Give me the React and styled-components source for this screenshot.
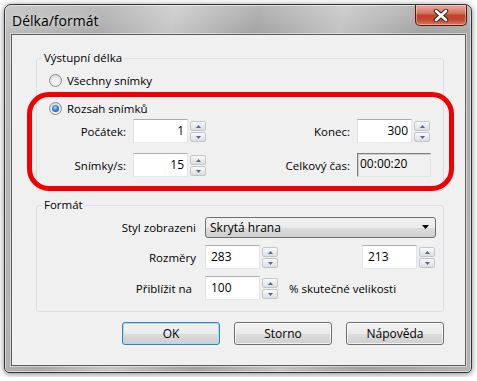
import React from "react";
import styled, { createGlobalStyle, css } from "styled-components";

const GlobalStyle = createGlobalStyle`
  html, body {
    margin: 0;
    padding: 0;
    background: #ffffff;
  }
  body {
    font-family: "Open Sans", "Noto Sans", sans-serif;
    font-size: 11.5px;
    color: #000000;
  }
  * {
    box-sizing: border-box;
  }
`;

const Page = styled.div`
  padding: 4px;
`;

const Window = styled.div`
  width: 468px;
  height: 369px;
  display: flex;
  flex-direction: column;
  border: 1px solid #343434;
  border-radius: 7px 7px 5px 5px;
  background:
    linear-gradient(180deg, rgba(255, 255, 255, 0.22), rgba(255, 255, 255, 0) 30px),
    linear-gradient(
      100deg,
      #bdbdbd 0%,
      #a9a9a9 18%,
      #c6c6c6 32%,
      #a2a2a2 48%,
      #c2c2c2 64%,
      #a1a1a1 80%,
      #b4b4b4 100%
    );
  box-shadow: 0 1px 6px rgba(0, 0, 0, 0.5), inset 0 0 0 1px rgba(255, 255, 255, 0.5);
`;

const TitleBar = styled.div`
  height: 29px;
  display: flex;
  align-items: flex-start;
  padding: 0 4px 0 7px;
`;

const Title = styled.div`
  align-self: center;
  margin-top: 2px;
  font-size: 14px;
  color: #000;
  text-shadow: 0 0 6px rgba(255, 255, 255, 0.85);
`;

const CloseButton = styled.div`
  margin-left: auto;
  width: 52px;
  height: 21px;
  border: 1px solid #4a1d15;
  border-top: none;
  border-radius: 0 0 5px 5px;
  background: linear-gradient(
    180deg,
    #e8ad9f 0%,
    #d8755f 40%,
    #c2412a 52%,
    #c5482f 75%,
    #e07a5c 100%
  );
  box-shadow: inset 0 0 0 1px rgba(255, 255, 255, 0.35);
  display: flex;
  align-items: center;
  justify-content: center;
`;

const Client = styled.div`
  position: relative;
  flex: 1;
  margin: 0 5px 6px 6px;
  border: 1px solid #5e5e5e;
  background: #f0f0f0;
  box-shadow: 0 0 0 1px rgba(255, 255, 255, 0.45);
  padding: 15px 21px 0 24px;
  display: flex;
  flex-direction: column;
`;

const Group = styled.fieldset`
  margin: ${(p) => p.$top || 0}px 0 0 0;
  padding: ${(p) => p.$pad};
  border: 1px solid #d5dfe5;
  border-radius: 3px;
  min-width: 0;
`;

const GroupLegend = styled.legend`
  padding: 0 2px;
  margin-left: -6px;
  height: 16px;
  line-height: 16px;
`;

const RadioRow = styled.label`
  display: flex;
  align-items: center;
  gap: 5px;
  height: 16px;
  padding-left: 1px;
  margin-top: ${(p) => p.$top || 0}px;
`;

const RadioCircle = styled.span`
  position: relative;
  width: 13px;
  height: 13px;
  border-radius: 50%;
  border: 1px solid #8a8c8e;
  background: radial-gradient(circle at 50% 60%, #fdfdfd 0%, #e6e6e6 55%, #c8c8c8 100%);

  ${(p) =>
    p.$checked &&
    css`
      &::after {
        content: "";
        position: absolute;
        left: 2px;
        top: 2px;
        width: 7px;
        height: 7px;
        border-radius: 50%;
        background: radial-gradient(
          circle at 45% 40%,
          #a6e0ff 0%,
          #3c8fd4 40%,
          #103f7c 100%
        );
      }
    `}
`;

const RangeGrid = styled.div`
  display: grid;
  grid-template-columns: 85px 73px 1fr 74px;
  grid-auto-rows: 24px;
  row-gap: 10px;
  margin-top: 3px;
`;

const FieldLabel = styled.div`
  align-self: center;
  text-align: right;
  padding-right: ${(p) => p.$gap || 7}px;
  white-space: nowrap;
`;

const Spin = styled.div`
  display: flex;
  gap: 2px;
  width: 73px;
  height: 24px;
`;

const SpinInput = styled.div`
  flex: 1;
  display: flex;
  align-items: center;
  justify-content: ${(p) => (p.$left ? "flex-start" : "flex-end")};
  padding: ${(p) => (p.$left ? "0 0 1px 5px" : "0 3px 1px 0")};
  background: #ffffff;
  border: 1px solid;
  border-color: #abadb3 #e2e3ea #e3e9ef #e2e3ea;
  font-size: 12px;
`;

const SpinButtons = styled.div`
  width: 16px;
  display: flex;
  flex-direction: column;
  gap: 1px;
  padding: 2px 0 1px;
`;

const SpinButton = styled.div`
  flex: 1;
  display: flex;
  align-items: center;
  justify-content: center;
  border: 1px solid #c2c6cc;
  border-radius: 2px;
  background: linear-gradient(180deg, #fafafa 0%, #eaeaea 55%, #dedede 100%);
`;

const ReadOnlyBox = styled.div`
  width: 74px;
  height: 24px;
  padding: 1px 2px 0;
  background: #f0f0f0;
  border: 1px solid;
  border-color: #7f7f7f #e4e4e4 #e4e4e4 #7f7f7f;
  box-shadow: inset 1px 1px 0 #cfcfcf;
  font-size: 12px;
  line-height: 18px;
`;

const FormatGrid = styled.div`
  display: grid;
  grid-template-columns: 157px 73px 1fr 74px;
  grid-template-rows: 21px 24px 24px;
  row-gap: 7px;
`;

const Select = styled.div`
  grid-column: 2 / -1;
  width: 231px;
  display: flex;
  align-items: center;
  justify-content: space-between;
  padding: 0 6px 1px 4px;
  border: 1px solid #707070;
  border-radius: 3px;
  background: linear-gradient(180deg, #f2f2f2 0%, #ebebeb 50%, #dddddd 51%, #cfcfcf 100%);
  font-size: 12px;
`;

const Suffix = styled.div`
  grid-column: 3 / -1;
  align-self: center;
  padding-left: 11px;
  white-space: nowrap;
`;

const ButtonRow = styled.div`
  display: flex;
  justify-content: flex-end;
  gap: 14px;
  margin-top: 10px;
`;

const Button = styled.div`
  width: 98px;
  height: 23px;
  display: flex;
  align-items: center;
  justify-content: center;
  padding-bottom: 1px;
  border: 1px solid ${(p) => (p.$default ? "#3c7fb1" : "#707070")};
  border-radius: 3px;
  background: linear-gradient(180deg, #f2f2f2 0%, #ebebeb 50%, #dddddd 51%, #cfcfcf 100%);
  box-shadow: ${(p) =>
    p.$default
      ? "inset 0 0 0 1px #9fe0f7"
      : "inset 0 0 0 1px rgba(255, 255, 255, 0.7)"};
  font-size: 12px;
`;

const Annotation = styled.div`
  position: absolute;
  left: 15px;
  top: 57px;
  width: 427px;
  height: 99px;
  border: 5px solid #f00000;
  border-radius: 22px;
  pointer-events: none;
`;

function Arrow({ up, color = "#50688f", w = 7, h = 4 }) {
  return (
    <svg width={w} height={h} viewBox="0 0 7 4">
      <polygon points={up ? "0,4 3.5,0 7,4" : "0,0 7,0 3.5,4"} fill={color} />
    </svg>
  );
}

function SpinBox({ value, left }) {
  return (
    <Spin>
      <SpinInput $left={left}>{value}</SpinInput>
      <SpinButtons>
        <SpinButton>
          <Arrow up w={5} h={3} />
        </SpinButton>
        <SpinButton>
          <Arrow w={5} h={3} />
        </SpinButton>
      </SpinButtons>
    </Spin>
  );
}

function CloseIcon() {
  return (
    <svg width="16" height="13" viewBox="0 0 16 13">
      <path d="M3 2 L13 11 M13 2 L3 11" stroke="#3a2a28" strokeWidth="4.6" strokeLinecap="round" />
      <path d="M3 2 L13 11 M13 2 L3 11" stroke="#ffffff" strokeWidth="2.6" strokeLinecap="round" />
    </svg>
  );
}

export default function App() {
  return (
    <Page>
      <GlobalStyle />
      <Window>
        <TitleBar>
          <Title>Délka/formát</Title>
          <CloseButton>
            <CloseIcon />
          </CloseButton>
        </TitleBar>
        <Client>
          <Group $pad="6px 12px 13px 11px">
            <GroupLegend>Výstupní délka</GroupLegend>
            <RadioRow>
              <RadioCircle />
              Všechny snímky
            </RadioRow>
            <RadioRow $top={12}>
              <RadioCircle $checked />
              Rozsah snímků
            </RadioRow>
            <RangeGrid>
              <FieldLabel>Počátek:</FieldLabel>
              <SpinBox value="1" />
              <FieldLabel>Konec:</FieldLabel>
              <SpinBox value="300" />
              <FieldLabel>Snímky/s:</FieldLabel>
              <SpinBox value="15" />
              <FieldLabel>Celkový čas:</FieldLabel>
              <ReadOnlyBox>00:00:20</ReadOnlyBox>
            </RangeGrid>
          </Group>

          <Group $top={6} $pad="4px 12px 11px 11px">
            <GroupLegend>Formát</GroupLegend>
            <FormatGrid>
              <FieldLabel $gap={9}>Styl zobrazeni</FieldLabel>
              <Select>
                Skrytá hrana
                <Arrow color="#000000" />
              </Select>
              <FieldLabel $gap={9}>Rozměry</FieldLabel>
              <SpinBox value="283" left />
              <div />
              <SpinBox value="213" left />
              <FieldLabel $gap={13}>Přiblížit na</FieldLabel>
              <SpinBox value="100" left />
              <Suffix>% skutečné velikosti</Suffix>
            </FormatGrid>
          </Group>

          <ButtonRow>
            <Button $default>OK</Button>
            <Button>Storno</Button>
            <Button>Nápověda</Button>
          </ButtonRow>

          <Annotation />
        </Client>
      </Window>
    </Page>
  );
}
